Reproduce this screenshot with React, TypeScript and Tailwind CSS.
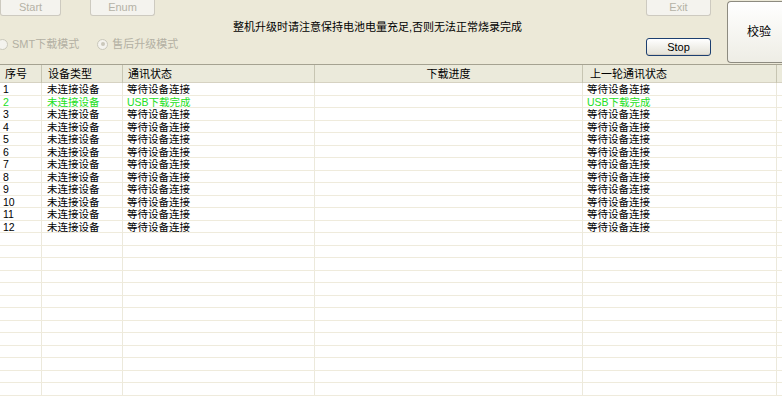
import React from "react";

type Row = {
  id: number;
  type: string;
  status: string;
  progress: string;
  last: string;
  ok?: boolean;
};

const rows: Row[] = Array.from({ length: 12 }, (_, i) => {
  const ok = i === 1;
  return {
    id: i + 1,
    type: "未连接设备",
    status: ok ? "USB下载完成" : "等待设备连接",
    progress: "",
    last: ok ? "USB下载完成" : "等待设备连接",
    ok,
  };
});

const emptyRows = Array.from({ length: 13 }, (_, i) => i);

const font = "font-['Liberation_Sans','Noto_Sans_CJK_SC',sans-serif]";

function XpButton({
  label,
  disabled,
  className,
}: {
  label: string;
  disabled?: boolean;
  className: string;
}) {
  return (
    <div
      className={
        "flex items-center justify-center rounded-[3px] border text-[11px] " +
        (disabled
          ? "border-[#cdcac0] bg-[#f4f3ee] text-[#b5b2a6] "
          : "border-[#1c3f70] bg-gradient-to-b from-white to-[#e3e1d6] text-black shadow-[inset_0_-1px_0_#d6d0c5] ") +
        className
      }
    >
      {label}
    </div>
  );
}

function Radio({ label, checked }: { label: string; checked?: boolean }) {
  return (
    <div className="flex items-center gap-[4px] text-[11px] text-[#b3b0a3]">
      <span className="flex h-[11px] w-[11px] items-center justify-center rounded-full border border-[#cac8bb] bg-[#f4f3ee]">
        {checked ? <span className="h-[4px] w-[4px] rounded-full bg-[#cac8bb]" /> : null}
      </span>
      <span>{label}</span>
    </div>
  );
}

function Cells({ row, green }: { row?: Row; green?: boolean }) {
  const color = green ? "text-[#22e022]" : "text-black";
  return (
    <div className={"grid h-[12.5px] grid-cols-[42px_81px_192px_268px_194px_1fr] border-b border-[#efebdc] leading-[12.5px] " + color}>
      <div className="border-r border-[#ece9dc] pl-[3px]">{row ? row.id : ""}</div>
      <div className="border-r border-[#ece9dc] pl-[5px]">{row ? row.type : ""}</div>
      <div className="border-r border-[#ece9dc] pl-[4px]">{row ? row.status : ""}</div>
      <div className="border-r border-[#ece9dc]">{row ? row.progress : ""}</div>
      <div className="border-r border-[#ece9dc] pl-[4px]">{row ? row.last : ""}</div>
      <div />
    </div>
  );
}

export default function App() {
  return (
    <div className={"flex h-[396px] w-[782px] flex-col overflow-hidden bg-[#ece9d8] " + font}>
      <div className="flex h-[64px] shrink-0">
        <div className="flex w-[200px] flex-col">
          <div className="flex gap-[29px]">
            <XpButton label="Start" disabled className="h-[17px] w-[61px] -mt-[1px] rounded-t-none border-t-0" />
            <XpButton label="Enum" disabled className="h-[17px] w-[65px] -mt-[1px] rounded-t-none border-t-0" />
          </div>
          <div className="mt-[20px] flex gap-[18px] -ml-[3px]">
            <Radio label="SMT下载模式" />
            <Radio label="售后升级模式" checked />
          </div>
        </div>
        <div className="w-[446px] pl-[33px] pt-[19px] text-[11px] text-black">
          整机升级时请注意保持电池电量充足,否则无法正常烧录完成
        </div>
        <div className="flex w-[66px] flex-col justify-between pb-[8px]">
          <XpButton label="Exit" disabled className="h-[17px] w-[65px] -mt-[1px] rounded-t-none border-t-0" />
          <XpButton label="Stop" className="h-[18px] w-[65px]" />
        </div>
        <div className="ml-[15px] flex-1 pt-[1px]">
          <div className="flex h-[62px] items-center justify-center rounded-l-[4px] border-y border-l border-[#8d8b80] bg-gradient-to-b from-white to-[#eeede5] pl-[8px] text-[12px] text-black">
            校验
          </div>
        </div>
      </div>

      <div className="flex flex-1 flex-col overflow-hidden border-t border-[#a5a291] bg-white text-[10.5px]">
        <div className="grid h-[18px] shrink-0 grid-cols-[42px_81px_192px_268px_194px_1fr] border-b border-[#d6d2c2] bg-[#ebeadb] text-[11px] leading-[18px] text-black">
          <div className="border-r border-[#c7c5b2] pl-[5px]">序号</div>
          <div className="border-r border-[#c7c5b2] pl-[6px]">设备类型</div>
          <div className="border-r border-[#c7c5b2] pl-[5px]">通讯状态</div>
          <div className="border-r border-[#c7c5b2] text-center">下载进度</div>
          <div className="border-r border-[#c7c5b2] pl-[7px]">上一轮通讯状态</div>
          <div />
        </div>
        {rows.map((row) => (
          <Cells key={row.id} row={row} green={row.ok} />
        ))}
        {emptyRows.map((i) => (
          <Cells key={"e" + i} />
        ))}
      </div>
    </div>
  );
}
